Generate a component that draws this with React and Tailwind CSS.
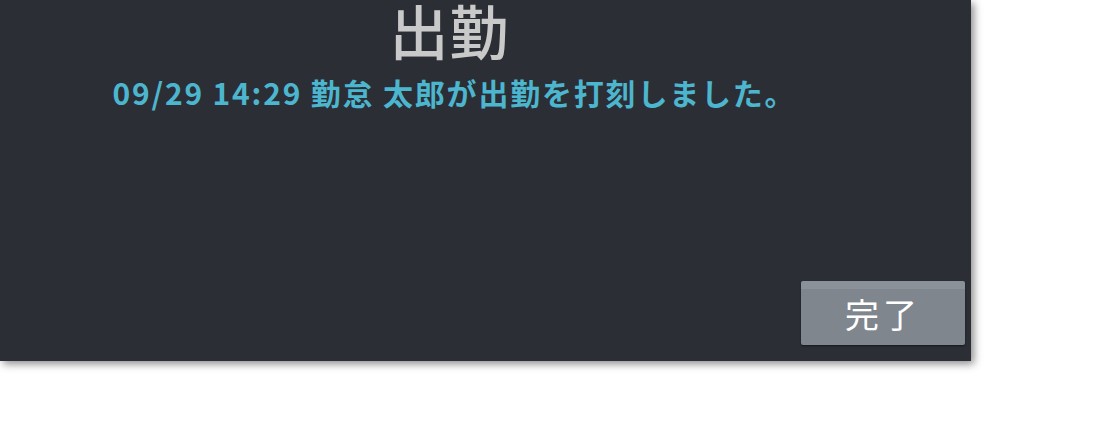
export default function App() {
  return (
    <div className="w-[1101px] h-[434px] bg-white overflow-hidden">
      <div
        className="w-[971px] h-[361px] bg-[#2c2e36] flex flex-col shadow-[3px_3px_8px_rgba(0,0,0,0.45)]"
        style={{ fontFamily: '"Noto Sans CJK JP", "Noto Sans", sans-serif' }}
      >
        <div className="flex-1 flex flex-col items-center pr-[72px]">
          <h1 className="text-[59px] leading-none font-medium text-[#c9c9c9] tracking-[1px]">出勤</h1>
          <p className="mt-[18px] ml-[10px] text-[30px] leading-none font-bold tracking-[1.8px] text-[#4cb6cf]">
            09/29 14:29 勤怠 太郎が出勤を打刻しました。
          </p>
        </div>
        <div className="flex justify-end pr-[6px] pb-[16px]">
          <button className="w-[164px] h-[64px] rounded-[2px] bg-[#7f868e] border-t-[8px] border-[#8a9199] text-white text-[34px] leading-none tracking-[4px] pb-[6px] shadow-[0_1px_2px_rgba(0,0,0,0.5)]">
            完了
          </button>
        </div>
      </div>
    </div>
  );
}
